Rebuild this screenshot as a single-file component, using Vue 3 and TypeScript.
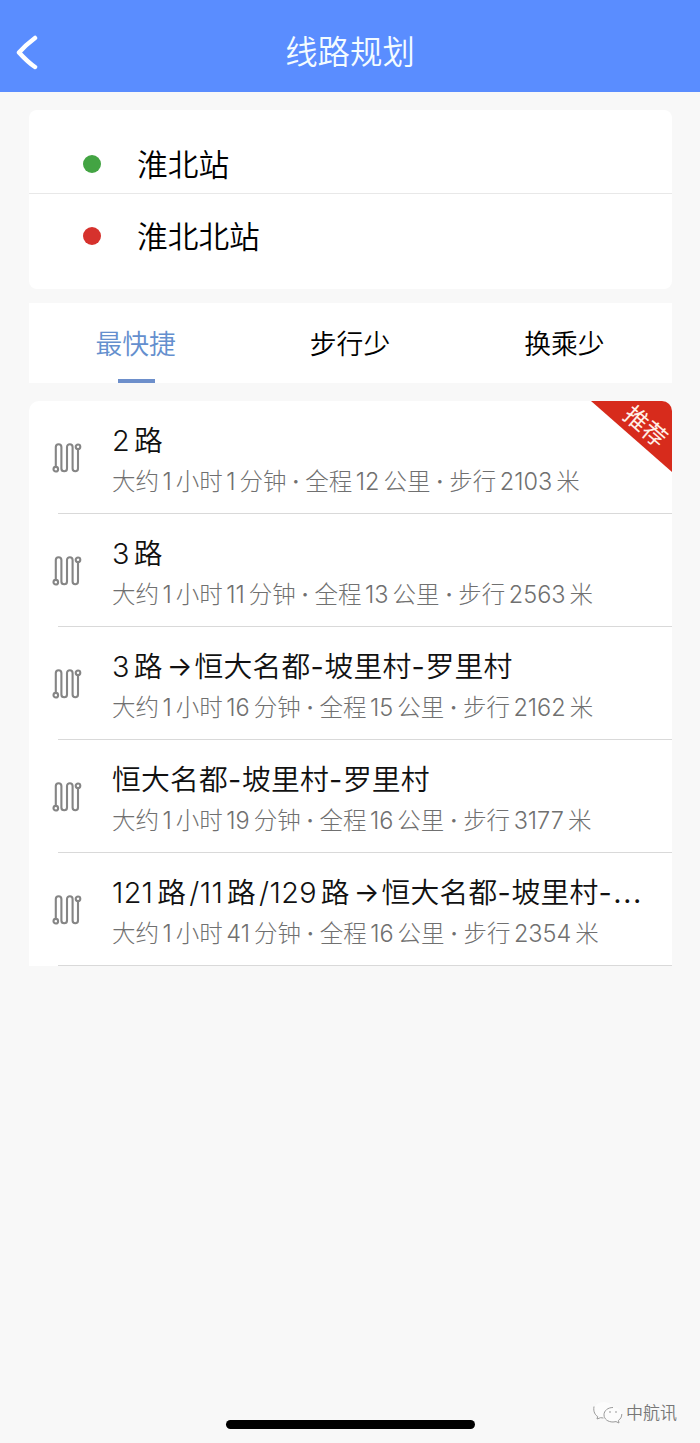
<script setup lang="ts">
import { ref } from 'vue'

interface Route {
  name: string
  detail: string
  recommended?: boolean
}

interface Run {
  text: string
  kind: 'han' | 'num' | 'arrow' | 'dash' | 'dot' | 'slash' | 'more'
}

const stops = [
  { name: '淮北站', kind: 'start' },
  { name: '淮北北站', kind: 'end' },
]
const tabs = ['最快捷', '步行少', '换乘少']
const active = ref(0)

const routes: Route[] = [
  { name: '2路', detail: '大约1小时1分钟·全程12公里·步行2103米', recommended: true },
  { name: '3路', detail: '大约1小时11分钟·全程13公里·步行2563米' },
  { name: '3路→恒大名都-坡里村-罗里村', detail: '大约1小时16分钟·全程15公里·步行2162米' },
  { name: '恒大名都-坡里村-罗里村', detail: '大约1小时19分钟·全程16公里·步行3177米' },
  { name: '121路/11路/129路→恒大名都-坡里村-…', detail: '大约1小时41分钟·全程16公里·步行2354米' },
]

// Splits mixed text so that digits and symbols get their own spacing
function runs(text: string): Run[] {
  const parts = text.match(/\d+|→|-|·|\/|…|[^\d→\-·/…]+/g) ?? []
  return parts.map((part) => {
    let kind: Run['kind'] = 'han'
    if (/^\d/.test(part)) kind = 'num'
    else if (part === '→') kind = 'arrow'
    else if (part === '-') kind = 'dash'
    else if (part === '·') kind = 'dot'
    else if (part === '/') kind = 'slash'
    else if (part === '…') kind = 'more'
    return { text: part, kind }
  })
}
</script>

<template>
  <div class="screen">
    <header class="bar">
      <svg class="back" width="24" height="36" viewBox="0 0 24 36">
        <path d="M20 4 C14 8.500 8 14 4 18.500 C9 24 14 29 20 33" />
      </svg>
      <h1>线路规划</h1>
    </header>

    <section class="card stops">
      <div v-for="s in stops" :key="s.name" class="stop" :class="s.kind">
        <i class="pin"></i><span>{{ s.name }}</span>
      </div>
    </section>

    <nav class="tabs">
      <button v-for="(t, i) in tabs" :key="t" class="tab" :class="{ active: i === active }" @click="active = i">
        <span>{{ t }}</span>
      </button>
    </nav>

    <section class="card routes">
      <article v-for="r in routes" :key="r.name" class="route">
        <svg class="way" width="30" height="32" viewBox="0 0 30 32">
          <circle cx="3.800" cy="27.200" r="2.300" />
          <circle cx="26" cy="4.800" r="2.300" />
          <path d="M3.800 24.500 V5 a2.800 2.800 0 0 1 5.600 0 V26.500 a2.800 2.800 0 0 0 5.600 0 V5 a2.800 2.800 0 0 1 5.600 0 V26.500 a2.700 2.700 0 0 0 5.400 0 V7.200" />
        </svg>
        <div class="info">
          <div class="name">
            <span v-for="(p, i) in runs(r.name)" :key="i" :class="p.kind">{{ p.text }}</span>
          </div>
          <div class="detail">
            <span v-for="(p, i) in runs(r.detail)" :key="i" :class="p.kind">{{ p.text }}</span>
          </div>
        </div>
        <div v-if="r.recommended" class="ribbon"><span>推荐</span></div>
      </article>
    </section>

    <footer class="foot">
      <div class="home"></div>
      <div class="mark">
        <svg width="30" height="24" viewBox="0 0 30 24">
          <path class="fill" d="M11 1 C5 1 1 4.800 1 9.500 C1 12.300 2.500 14.500 4.700 16 L4 19 L7.500 17.200 L11 17.800 C16.500 17.500 20.500 14 20.500 9.500 C20.500 4.800 16.500 1 11 1Z" />
          <path d="M1 5.500 C0 11 2.500 14.300 4.700 15.500 L4 18 L7.500 16.700 L10.500 17" />
          <path class="fill" d="M20 6.500 C14.800 6.500 11 9.700 11 13.800 C11 18 14.800 21 20 21 L23 20.600 L26 22 L25.400 19.400 C27.500 18 28.800 16 28.800 13.800 C28.800 9.700 25 6.500 20 6.500Z" />
          <path d="M20 6.500 C14.800 6.500 11 9.700 11 13.800 C11 18 14.800 21 20 21 L23 20.600 L26 22 L25.400 19.400 C27.500 18 28.800 16 28.800 13" />
          <path d="M16 11 h2 M22 11 h2" />
        </svg>
        <span>中航讯</span>
      </div>
    </footer>
  </div>
</template>

<style>
body {
  background: #f8f8f8;
}
</style>

<style scoped>
.screen {
  display: flex;
  flex-direction: column;
  box-sizing: border-box;
  height: 1443px;
  background: #f8f8f8;
  color: #111;
  font-family: Inter, 'Noto Sans CJK SC', sans-serif;
  font-weight: 350;
  overflow: hidden;
}
.bar {
  position: relative;
  display: flex;
  align-items: center;
  justify-content: center;
  box-sizing: border-box;
  flex: none;
  height: 92px;
  padding-top: 14px;
  background: #5a8dff;
}
.back {
  position: absolute;
  left: 15px;
  top: 34px;
  fill: none;
  stroke: #fff;
  stroke-width: 4.5;
  stroke-linecap: round;
  stroke-linejoin: round;
}
h1 {
  margin: 0;
  color: #f4fcff;
  font-size: 32.400px;
  font-weight: 350;
  line-height: 48px;
}
.card {
  flex: none;
  box-sizing: border-box;
  width: 643px;
  margin-left: 29px;
  background: #fff;
  border-radius: 8px;
}
.stops {
  height: 179px;
  margin-top: 18px;
}
.stop {
  display: flex;
  align-items: center;
  box-sizing: border-box;
  padding-left: 54px;
  color: #000;
  font-size: 30.700px;
  line-height: 44px;
}
.stop span {
  padding-top: 2px;
}
.stop.start {
  height: 84px;
  padding-top: 24px;
  border-bottom: 1px solid #e8e8e8;
}
.stop.end {
  height: 84px;
}
.pin {
  width: 18px;
  height: 18px;
  margin-right: 36px;
  border-radius: 50%;
  background: #43a443;
}
.end .pin {
  background: #d6322d;
}
.tabs {
  display: flex;
  flex: none;
  width: 643px;
  height: 80px;
  margin: 14px 0 0 29px;
  background: #fff;
}
.tab {
  position: relative;
  flex: 1;
  padding: 2px 1px 0 0;
  border: 0;
  background: none;
  color: #000;
  font: inherit;
  font-size: 26.800px;
  line-height: 40px;
}
.tab.active {
  color: #648fce;
}
.tab.active::after {
  content: '';
  position: absolute;
  left: 89px;
  bottom: 0;
  width: 37px;
  height: 4px;
  background: #6d8fcb;
}
.routes {
  margin-top: 18px;
  overflow: hidden;
  border-radius: 10px 10px 0 0;
}
.route {
  position: relative;
  display: flex;
  box-sizing: border-box;
  height: 113px;
  padding-left: 23px;
}
.route::after {
  content: '';
  position: absolute;
  left: 29px;
  right: 0;
  bottom: 0;
  height: 1px;
  background: #d9d9d9;
}
.way {
  flex: none;
  margin-top: 41px;
  fill: none;
  stroke: #858585;
  stroke-width: 2.100;
}
.info {
  margin-left: 30px;
  padding-top: 19px;
  white-space: nowrap;
}
.name,
.detail {
  display: flex;
}
.name {
  height: 42px;
  font-size: 28.800px;
  line-height: 42px;
}
.name .han {
  letter-spacing: 0.200px;
}
.detail {
  height: 36px;
  margin-top: 2px;
  color: #707070;
  font-size: 23.500px;
  font-weight: 300;
  line-height: 36px;
}
.num {
  margin: 0 4px 0 3.500px;
}
.name .num {
  margin: 0 4px 0 0;
  letter-spacing: 0.300px;
}
.arrow {
  margin: 0 2px 0 4px;
  font-size: 27px;
  font-weight: 400;
}
.dash {
  margin-right: 0.700px;
  font-weight: 400;
}
.slash {
  margin: 0 0.500px 0 3px;
}
.more {
  margin-top: -3px;
  font-size: 35px;
}
.dot {
  width: 18.800px;
  font-weight: 500;
  text-align: center;
}
.ribbon {
  position: absolute;
  right: 0;
  top: 0;
  display: flex;
  justify-content: flex-end;
  box-sizing: border-box;
  width: 81px;
  height: 71px;
  padding: 11px 3px 0 0;
}
.ribbon::before {
  content: '';
  position: absolute;
  inset: 0;
  background: #d72b1c;
  clip-path: polygon(0 0, 100% 0, 100% 100%);
}
.ribbon span {
  position: relative;
  height: 30px;
  color: #fff0e8;
  font-size: 24px;
  font-weight: 400;
  line-height: 30px;
  white-space: nowrap;
  transform: rotate(41deg);
}
.foot {
  position: relative;
  display: flex;
  flex: none;
  align-items: flex-end;
  justify-content: center;
  box-sizing: border-box;
  height: 58px;
  margin-top: auto;
  padding: 0 0 14px 1px;
}
.home {
  width: 249px;
  height: 9px;
  border-radius: 5px;
  background: #000;
}
.mark {
  position: absolute;
  right: 23px;
  bottom: 18px;
  display: flex;
  align-items: center;
  gap: 3px;
  color: #777;
  font-size: 17px;
  line-height: 24px;
}
.mark svg {
  fill: none;
  stroke: #999;
  stroke-width: 1;
}
.mark .fill {
  fill: #fcfcfc;
  stroke: none;
}
</style>
